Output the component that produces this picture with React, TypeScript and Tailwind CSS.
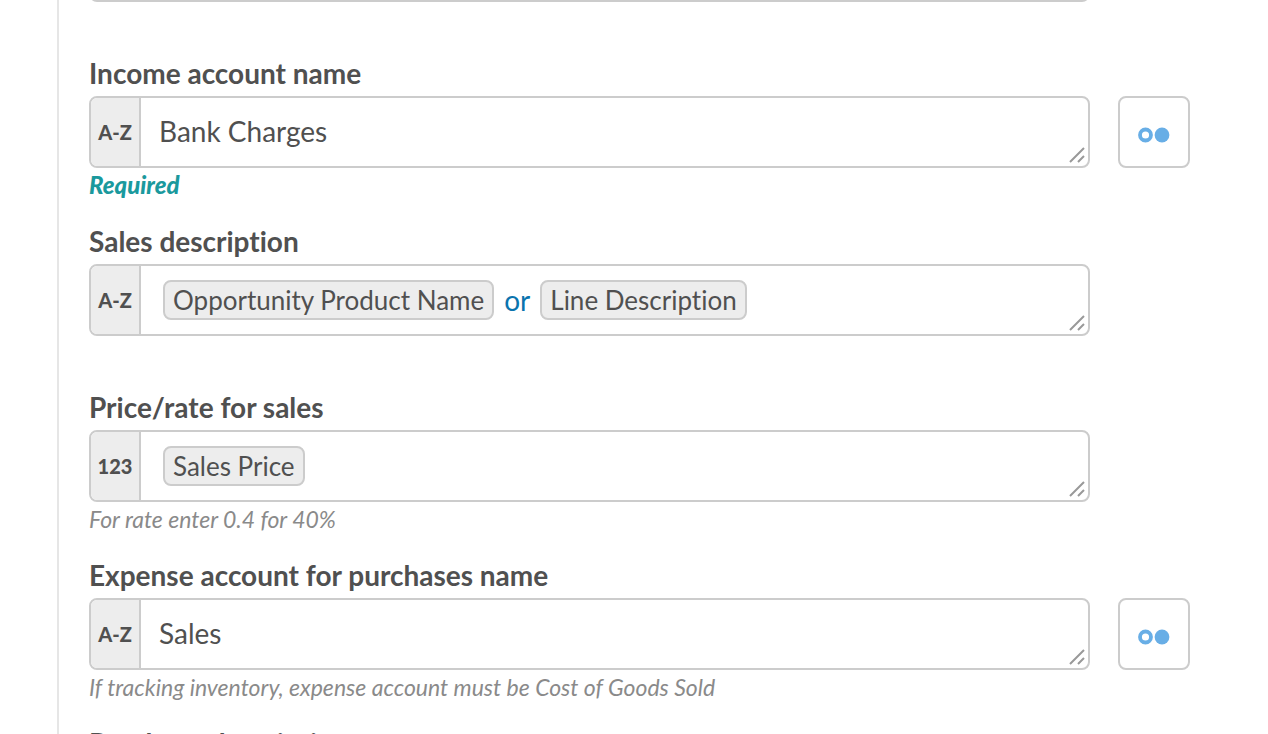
import { useId, type ReactNode } from "react";

type FieldProps = {
  label: string;
  kind?: "A-Z" | "123";
  value?: string;
  tokens?: ReactNode;
  hint?: string;
  required?: boolean;
  toggle?: boolean;
};

function Grip() {
  return (
    <svg
      className="pointer-events-none absolute right-[3px] bottom-[3px] size-4"
      viewBox="0 0 16 16"
      fill="none"
      stroke="#999999"
      strokeWidth="2"
      aria-hidden="true"
    >
      <path d="M1 15 15 1M9 15l6-6" />
    </svg>
  );
}

function Token({ children }: { children: ReactNode }) {
  return (
    <span className="flex h-10 items-center rounded-lg border-2 border-[#cccccc] bg-[#ededed] px-2 text-[26px] leading-8 whitespace-nowrap">
      {children}
    </span>
  );
}

function Field({ label, kind = "A-Z", value, tokens, hint, required, toggle }: FieldProps) {
  const id = useId();
  const hintText = required ? "Required" : hint;
  return (
    <div className="flex flex-col">
      <label
        id={`${id}-label`}
        htmlFor={tokens ? undefined : id}
        className="pb-2.5 text-[28px] leading-[26px] font-bold"
      >
        {label}
      </label>
      <div className="flex gap-7">
        <div className="relative flex h-18 min-w-0 flex-1 overflow-hidden rounded-lg border-2 border-[#cccccc] bg-white">
          <span className="flex w-[50px] shrink-0 items-center justify-center border-r-2 border-[#cccccc] bg-[#ededed] text-[20px] leading-6 font-black">
            {kind}
          </span>
          {tokens ? (
            <div
              role="textbox"
              tabIndex={0}
              aria-labelledby={`${id}-label`}
              className="flex min-w-0 flex-1 items-center gap-2.5 pl-[22px] outline-none"
            >
              {tokens}
            </div>
          ) : (
            <textarea
              id={id}
              defaultValue={value}
              rows={1}
              className="min-w-0 flex-1 resize-none overflow-hidden px-[18px] py-[15px] text-[28px] leading-9 outline-none"
            />
          )}
          <Grip />
        </div>
        <div className="size-18 shrink-0">
          {toggle && (
            <button
              type="button"
              aria-label={`Switch input mode for ${label}`}
              className="flex size-18 items-center justify-center rounded-lg border-2 border-[#cccccc] bg-white pt-1.5"
            >
              <svg width="32" height="16" viewBox="0 0 32 16" aria-hidden="true">
                <circle cx="7.5" cy="8" r="5.5" fill="none" stroke="#68aee6" strokeWidth="3.8" />
                <circle cx="24" cy="8" r="7.4" fill="#68aee6" />
              </svg>
            </button>
          )}
        </div>
      </div>
      <p
        className={
          required
            ? "h-15 pt-1 text-[24px] leading-[26px] font-black text-[#1a999d] italic"
            : hintText
              ? "h-15 pt-1 text-[23px] leading-[26px] text-[#8a8a8a] italic"
              : "h-[58px]"
        }
      >
        {hintText}
      </p>
    </div>
  );
}

export default function App() {
  return (
    <div className="h-screen overflow-hidden bg-white font-['Lato',sans-serif] text-[#505050] [font-variant-ligatures:none]">
      <form className="-mt-[70px] ml-[57px] flex flex-col border-l-2 border-[#e6e6e6] pr-[78px] pl-[30px]">
        <div className="flex gap-7 pb-[58px]">
          <textarea
            aria-label="Name"
            className="h-18 min-w-0 flex-1 resize-none rounded-lg border-2 border-[#cccccc] bg-white"
          />
          <div className="size-18 shrink-0" />
        </div>
        <Field label="Income account name" value="Bank Charges" required toggle />
        <Field
          label="Sales description"
          tokens={
            <>
              <Token>Opportunity Product Name</Token>
              <span className="text-[28px] leading-8 text-[#0a74ae]">or</span>
              <Token>Line Description</Token>
            </>
          }
        />
        <Field
          label="Price/rate for sales"
          kind="123"
          tokens={<Token>Sales Price</Token>}
          hint="For rate enter 0.4 for 40%"
        />
        <Field
          label="Expense account for purchases name"
          value="Sales"
          hint="If tracking inventory, expense account must be Cost of Goods Sold"
          toggle
        />
        <Field label="Purchase description" value="" />
      </form>
    </div>
  );
}
